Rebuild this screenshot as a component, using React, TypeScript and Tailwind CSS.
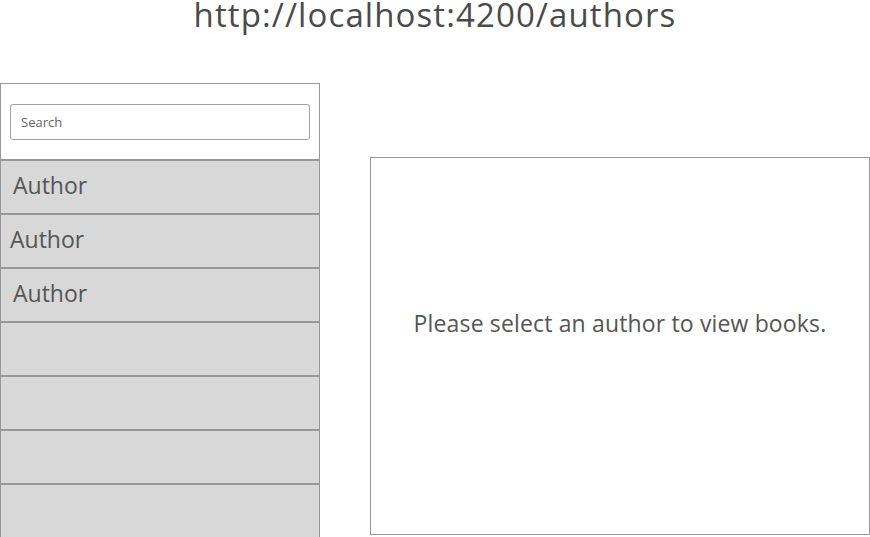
import React from 'react';

const authors = ['Author', 'Author', 'Author', '', '', '', ''];
// the wireframe has slightly uneven text indents
const indents = ['pl-[12px]', 'pl-[9px]', 'pl-[12px]', 'pl-[12px]', 'pl-[12px]', 'pl-[12px]', 'pl-[12px]'];

export default function App() {
  return (
    <div className="w-[870px] h-[537px] overflow-hidden bg-white text-[#4a4a4a] font-['Open_Sans',sans-serif]">
      <header className="h-[83px] flex justify-center">
        <h1 className="text-[33px] leading-[29px] tracking-[1.1px] text-[#4a4a4a]">http://localhost:4200/authors</h1>
      </header>

      <div className="flex items-start gap-[50px]">
        <div className="w-[320px] flex flex-col">
          <div className="h-[77px] border border-[#979797] bg-white px-[9px] pt-[20px]">
            <input
              type="text"
              readOnly
              placeholder="Search"
              className="w-full h-[36px] border border-[#a0a0a0] rounded-[3px] px-[10px] text-[13px] text-[#555] placeholder:text-[#666] outline-none bg-white"
            />
          </div>
          {authors.map((name, i) => (
            <div
              key={i}
              className={`h-[54px] first:-mt-px border border-[#979797] bg-[#d8d8d8] flex items-center pb-[3px] text-[23px] text-[#555] ${indents[i]}`}
            >
              {name}
            </div>
          ))}
        </div>

        <div className="mt-[74px] w-[500px] h-[378px] border border-[#979797] bg-white flex justify-center pt-[149px]">
          <p className="text-[23px] leading-[32px] tracking-[0.15px] text-[#555]">Please select an author to view books.</p>
        </div>
      </div>
    </div>
  );
}
